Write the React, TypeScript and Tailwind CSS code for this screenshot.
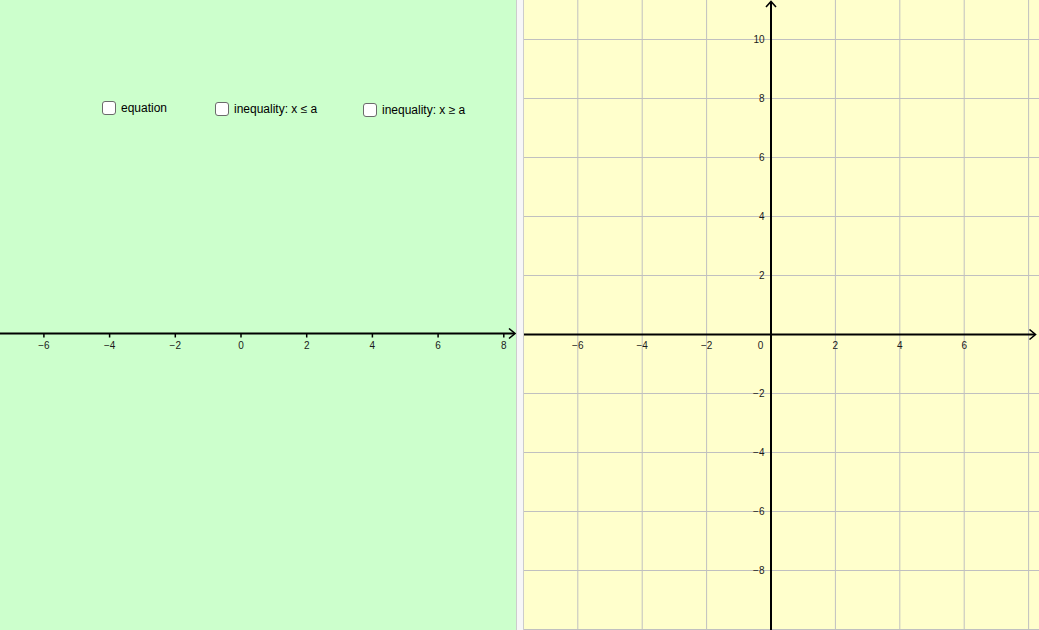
import React from "react";

const FONT = '"Liberation Sans", Arial, sans-serif';
const minus = (n: number) => (n < 0 ? "\u2212" + Math.abs(n) : String(n));

function LeftAxis() {
  const ox = 241;
  const u = 32.85;
  const ay = 333.5;
  const ticks = [-6, -4, -2, 0, 2, 4, 6, 8];
  return (
    <svg width={516} height={630} className="absolute left-0 top-0">
      <line x1={0} y1={ay} x2={514} y2={ay} stroke="#000" strokeWidth={2} />
      <polyline points={`509,328.5 515,333.5 509,338.5`} fill="none" stroke="#000" strokeWidth={1.6} />
      {ticks.map((t) => {
        const x = ox + t * u;
        return (
          <g key={t}>
            <line x1={x} y1={ay} x2={x} y2={ay + 4} stroke="#000" strokeWidth={1.5} />
            <text x={x} y={348.5} fontSize={10} fontFamily={FONT} fill="#1a1a1a" textAnchor="middle">
              {minus(t)}
            </text>
          </g>
        );
      })}
    </svg>
  );
}

function RightGraph() {
  const ox = 247;
  const oy = 334.5;
  const ux = 32.2;
  const uy = 29.5;
  const xs = [-6, -4, -2, 2, 4, 6, 8];
  const ys = [-10, -8, -6, -4, -2, 2, 4, 6, 8, 10];
  return (
    <svg width={515} height={630} className="absolute left-0 top-0">
      {xs.map((t) => (
        <line key={"gx" + t} x1={ox + t * ux} y1={0} x2={ox + t * ux} y2={630} stroke="#c0c0c0" strokeWidth={1} />
      ))}
      {ys.map((t) => (
        <line key={"gy" + t} x1={0} y1={oy - t * uy} x2={515} y2={oy - t * uy} stroke="#c0c0c0" strokeWidth={1} />
      ))}
      <line x1={0} y1={oy} x2={511} y2={oy} stroke="#000" strokeWidth={2} />
      <polyline points={`505.5,329.5 511.5,334.5 505.5,339.5`} fill="none" stroke="#000" strokeWidth={1.6} />
      <line x1={ox} y1={2} x2={ox} y2={630} stroke="#000" strokeWidth={2} />
      <polyline points={`${ox - 5},7 ${ox},1.5 ${ox + 5},7`} fill="none" stroke="#000" strokeWidth={1.6} />
      {[-6, -4, -2, 2, 4, 6].map((t) => {
        const x = ox + t * ux;
        return (
          <text key={"lx" + t} x={x} y={349} fontSize={10} fontFamily={FONT} fill="#1a1a1a" textAnchor="middle">
            {minus(t)}
          </text>
        );
      })}
      <text x={ox - 10.5} y={349} fontSize={10} fontFamily={FONT} fill="#1a1a1a" textAnchor="middle">
        0
      </text>
      {[-8, -6, -4, -2, 2, 4, 6, 8, 10].map((t) => {
        const y = oy - t * uy;
        return (
          <text key={"ly" + t} x={240.5} y={y + 3.6} fontSize={10} fontFamily={FONT} fill="#1a1a1a" textAnchor="end">
            {minus(t)}
          </text>
        );
      })}
    </svg>
  );
}

function Check({ left, top, label }: { left: number; top: number; label: string }) {
  return (
    <label
      className="absolute flex items-center gap-[5px] text-[12px] leading-[14px] text-black"
      style={{ left, top, fontFamily: FONT }}
    >
      <span className="block w-[14px] h-[14px] rounded-[3px] border border-[#6b6b6b] bg-white" />
      <span>{label}</span>
    </label>
  );
}

export default function App() {
  return (
    <div className="flex w-[1039px] h-[630px] overflow-hidden">
      <div className="relative w-[516px] h-full bg-[#ccffcc]">
        <LeftAxis />
        <Check left={102} top={101} label="equation" />
        <Check left={215} top={101.5} label="inequality: x ≤ a" />
        <Check left={363} top={103} label="inequality: x ≥ a" />
      </div>
      <div className="w-[8px] h-full border-l border-r border-[#cccccc] bg-[#f7f7f7]" />
      <div className="relative flex-1 h-full bg-[#ffffcc]">
        <RightGraph />
      </div>
    </div>
  );
}
